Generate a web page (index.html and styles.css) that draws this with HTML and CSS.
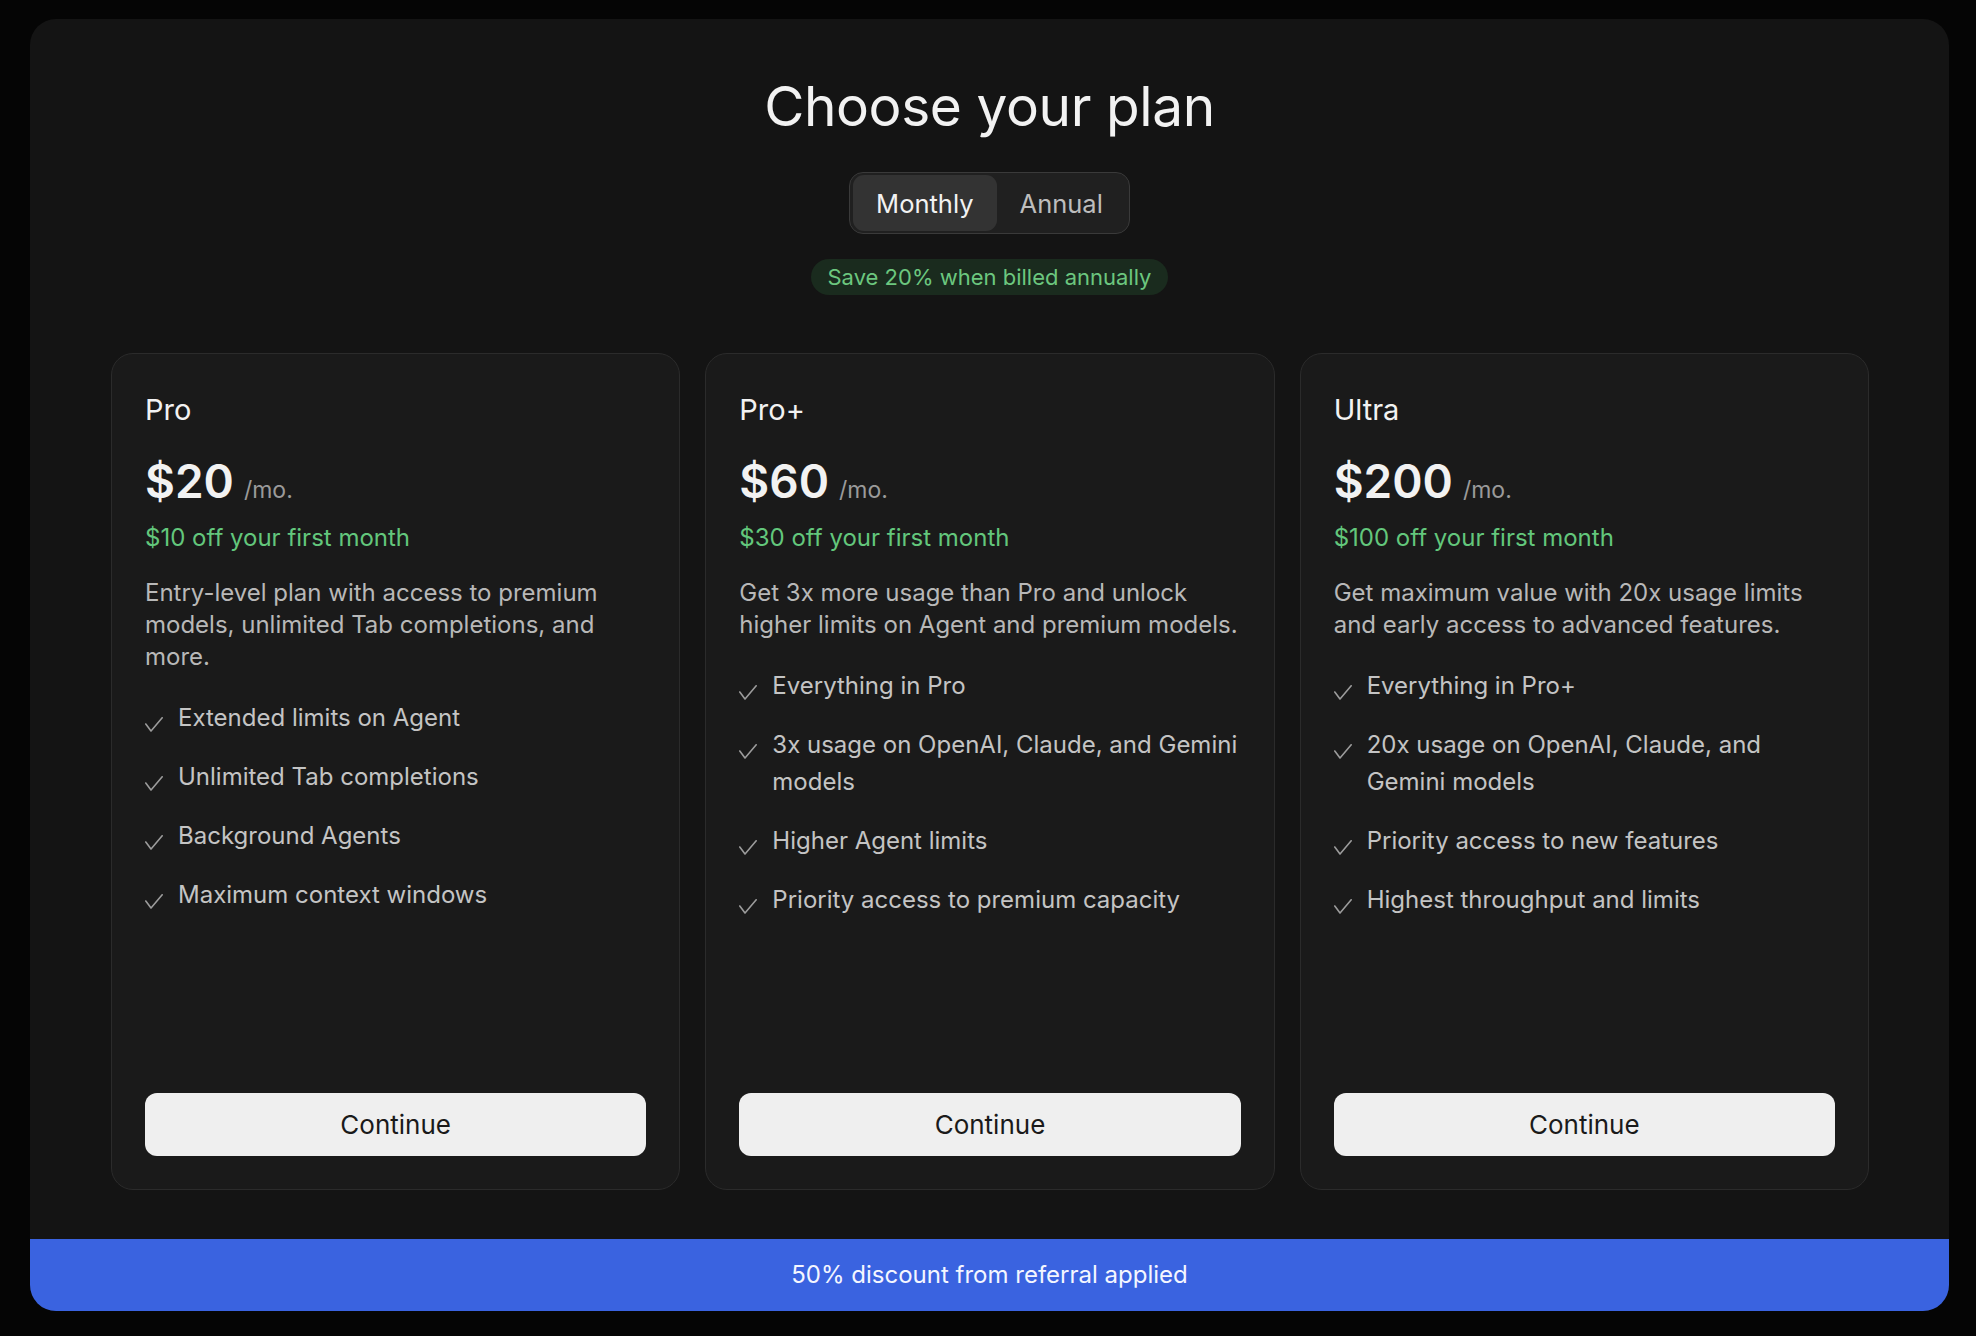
FILE: index.html
```html
<!DOCTYPE html>
<html lang="en">
<head>
    <meta charset="UTF-8">
    <meta name="viewport" content="width=device-width, initial-scale=1.0">
    <title>Choose your plan</title>
    <link rel="stylesheet" href="styles.css">
</head>
<body>

    <div class="panel">
        <h1>Choose your plan</h1>

        <!-- Billing period switch -->
        <div class="toggle">
            <button class="toggle-option active">Monthly</button>
            <button class="toggle-option">Annual</button>
        </div>
        <div class="save-badge">Save 20% when billed annually</div>

        <div class="plans">
            <div class="plan">
                <div class="plan-name">Pro</div>
                <div class="plan-price"><span class="amount">$20</span><span class="period">/mo.</span></div>
                <div class="plan-offer">$10 off your first month</div>
                <p class="plan-desc">Entry-level plan with access to premium models, unlimited Tab completions, and more.</p>
                <ul class="features">
                    <li><svg class="check" viewBox="0 0 18 15"><polyline points="0.8,7 6,14 17.2,0.8"/></svg><span>Extended limits on Agent</span></li>
                    <li><svg class="check" viewBox="0 0 18 15"><polyline points="0.8,7 6,14 17.2,0.8"/></svg><span>Unlimited Tab completions</span></li>
                    <li><svg class="check" viewBox="0 0 18 15"><polyline points="0.8,7 6,14 17.2,0.8"/></svg><span>Background Agents</span></li>
                    <li><svg class="check" viewBox="0 0 18 15"><polyline points="0.8,7 6,14 17.2,0.8"/></svg><span>Maximum context windows</span></li>
                </ul>
                <button class="continue">Continue</button>
            </div>

            <div class="plan">
                <div class="plan-name">Pro+</div>
                <div class="plan-price"><span class="amount">$60</span><span class="period">/mo.</span></div>
                <div class="plan-offer">$30 off your first month</div>
                <p class="plan-desc">Get 3x more usage than Pro and unlock higher limits on Agent and premium models.</p>
                <ul class="features">
                    <li><svg class="check" viewBox="0 0 18 15"><polyline points="0.8,7 6,14 17.2,0.8"/></svg><span>Everything in Pro</span></li>
                    <li><svg class="check" viewBox="0 0 18 15"><polyline points="0.8,7 6,14 17.2,0.8"/></svg><span>3x usage on OpenAI, Claude, and Gemini models</span></li>
                    <li><svg class="check" viewBox="0 0 18 15"><polyline points="0.8,7 6,14 17.2,0.8"/></svg><span>Higher Agent limits</span></li>
                    <li><svg class="check" viewBox="0 0 18 15"><polyline points="0.8,7 6,14 17.2,0.8"/></svg><span>Priority access to premium capacity</span></li>
                </ul>
                <button class="continue">Continue</button>
            </div>

            <div class="plan">
                <div class="plan-name">Ultra</div>
                <div class="plan-price"><span class="amount">$200</span><span class="period">/mo.</span></div>
                <div class="plan-offer">$100 off your first month</div>
                <p class="plan-desc">Get maximum value with 20x usage limits and early access to advanced features.</p>
                <ul class="features">
                    <li><svg class="check" viewBox="0 0 18 15"><polyline points="0.8,7 6,14 17.2,0.8"/></svg><span>Everything in Pro+</span></li>
                    <li><svg class="check" viewBox="0 0 18 15"><polyline points="0.8,7 6,14 17.2,0.8"/></svg><span>20x usage on OpenAI, Claude, and Gemini models</span></li>
                    <li><svg class="check" viewBox="0 0 18 15"><polyline points="0.8,7 6,14 17.2,0.8"/></svg><span>Priority access to new features</span></li>
                    <li><svg class="check" viewBox="0 0 18 15"><polyline points="0.8,7 6,14 17.2,0.8"/></svg><span>Highest throughput and limits</span></li>
                </ul>
                <button class="continue">Continue</button>
            </div>
        </div>

        <!-- Referral notice -->
        <div class="referral">50% discount from referral applied</div>
    </div>

</body>
</html>
```

FILE: styles.css
```css
html, body {
    height: 100%;
}
body {
    font-family: Inter, "Noto Sans", sans-serif;
    margin: 0;
    padding: 19px 27px 25px 30px;
    box-sizing: border-box;
    background-color: #050505;
    color: #f2f2f2;
}
.panel {
    height: 100%;
    display: flex;
    flex-direction: column;
    align-items: center;
    padding-top: 52px;
    box-sizing: border-box;
    background-color: #141414;
    border-radius: 26px;
    overflow: hidden;
}
h1 {
    margin: 0;
    font-size: 55px;
    line-height: 70px;
    font-weight: 400;
    letter-spacing: -0.4px;
    color: #f2f2f2;
}
.toggle {
    display: flex;
    margin-top: 31px;
    padding: 2px 3px;
    background-color: #202020;
    border: 1px solid #3a3a3a;
    border-radius: 14px;
}
.toggle-option {
    height: 56px;
    padding: 0 23px;
    font-family: inherit;
    font-size: 25.5px;
    color: #bdbdbd;
    background: none;
    border: none;
    border-radius: 11px;
    cursor: pointer;
}
.toggle-option.active {
    color: #f2f2f2;
    background-color: #333333;
}
.save-badge {
    margin-top: 25px;
    height: 36px;
    line-height: 36px;
    padding: 0 17px;
    font-size: 22px;
    color: #6cc77f;
    background-color: #1a2b1e;
    border-radius: 18px;
}
.plans {
    flex: 1;
    align-self: stretch;
    display: grid;
    grid-template-columns: repeat(3, 1fr);
    gap: 25px;
    margin: 58px 80px 0 81px;
}
.plan {
    display: flex;
    flex-direction: column;
    padding: 38px 33px 33px;
    background-color: #1a1a1a;
    border: 1.5px solid #2b2b2b;
    border-radius: 22px;
}
.plan-name {
    font-size: 29px;
    line-height: 36px;
    color: #f2f2f2;
}
.plan-price {
    margin-top: 25px;
    line-height: 56px;
}
.amount {
    font-size: 46px;
    font-weight: 600;
    color: #f2f2f2;
}
.period {
    margin-left: 10px;
    font-size: 23px;
    color: #9a9a9a;
}
.plan-offer {
    margin-top: 3px;
    font-size: 24px;
    line-height: 30px;
    color: #63c77c;
}
.plan-desc {
    margin: 24px 0 0;
    font-size: 24px;
    line-height: 32px;
    color: #b8b8b8;
}
.features {
    list-style: none;
    margin: 26px 0 0;
    padding: 0;
    display: flex;
    flex-direction: column;
    gap: 22px;
}
.features li {
    display: flex;
    align-items: flex-start;
    font-size: 24px;
    line-height: 37px;
    color: #c4c4c4;
}
.check {
    flex: none;
    width: 18px;
    height: 15px;
    margin: 18px 15px 0 0;
    fill: none;
    stroke: #9c9c9c;
    stroke-width: 1.6;
    stroke-linecap: round;
    stroke-linejoin: round;
}
.continue {
    margin-top: auto;
    height: 63px;
    font-family: inherit;
    font-size: 26px;
    color: #1a1a1a;
    background-color: #efefef;
    border: none;
    border-radius: 12px;
    cursor: pointer;
}
.referral {
    align-self: stretch;
    margin-top: 49px;
    height: 72px;
    line-height: 72px;
    text-align: center;
    font-size: 24px;
    color: #f4f6ff;
    background-color: #3a63e0;
}
```
